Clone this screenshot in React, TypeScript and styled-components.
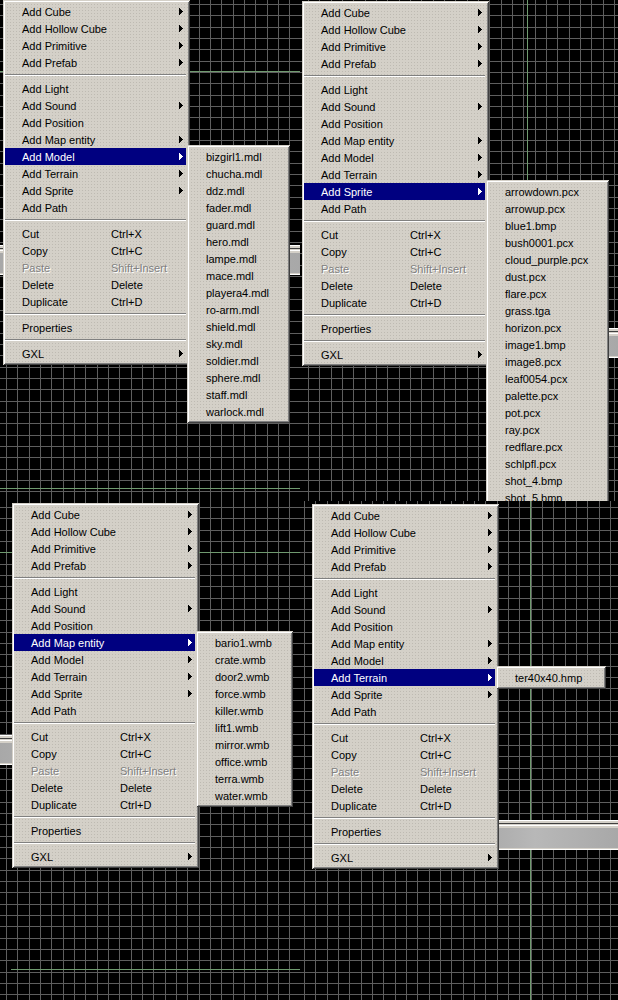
import styled, { createGlobalStyle } from 'styled-components';

const GlobalStyle = createGlobalStyle`
  html, body {
    margin: 0;
    padding: 0;
    background: #000;
  }
  body {
    width: 618px;
    height: 1000px;
    overflow: hidden;
    font-family: "Liberation Sans", Arial, sans-serif;
    font-size: 11px;
  }
`;

type Entry =
  | { kind: 'sep' }
  | { kind: 'item'; label: string; shortcut?: string; sub?: boolean; disabled?: boolean };

const sep: Entry = { kind: 'sep' };
const item = (label: string, opts: Partial<{ shortcut: string; sub: boolean; disabled: boolean }> = {}): Entry => ({
  kind: 'item',
  label,
  ...opts
});

const mainEntries: Entry[] = [
  item('Add Cube', { sub: true }),
  item('Add Hollow Cube', { sub: true }),
  item('Add Primitive', { sub: true }),
  item('Add Prefab', { sub: true }),
  sep,
  item('Add Light'),
  item('Add Sound', { sub: true }),
  item('Add Position'),
  item('Add Map entity', { sub: true }),
  item('Add Model', { sub: true }),
  item('Add Terrain', { sub: true }),
  item('Add Sprite', { sub: true }),
  item('Add Path'),
  sep,
  item('Cut', { shortcut: 'Ctrl+X' }),
  item('Copy', { shortcut: 'Ctrl+C' }),
  item('Paste', { shortcut: 'Shift+Insert', disabled: true }),
  item('Delete', { shortcut: 'Delete' }),
  item('Duplicate', { shortcut: 'Ctrl+D' }),
  sep,
  item('Properties'),
  sep,
  item('GXL', { sub: true })
];

const models = [
  'bizgirl1.mdl', 'chucha.mdl', 'ddz.mdl', 'fader.mdl', 'guard.mdl', 'hero.mdl',
  'lampe.mdl', 'mace.mdl', 'playera4.mdl', 'ro-arm.mdl', 'shield.mdl', 'sky.mdl',
  'soldier.mdl', 'sphere.mdl', 'staff.mdl', 'warlock.mdl'
];

const sprites = [
  'arrowdown.pcx', 'arrowup.pcx', 'blue1.bmp', 'bush0001.pcx', 'cloud_purple.pcx',
  'dust.pcx', 'flare.pcx', 'grass.tga', 'horizon.pcx', 'image1.bmp', 'image8.pcx',
  'leaf0054.pcx', 'palette.pcx', 'pot.pcx', 'ray.pcx', 'redflare.pcx', 'schlpfl.pcx',
  'shot_4.bmp', 'shot_5.bmp'
];

const entities = [
  'bario1.wmb', 'crate.wmb', 'door2.wmb', 'force.wmb', 'killer.wmb',
  'lift1.wmb', 'mirror.wmb', 'office.wmb', 'terra.wmb', 'water.wmb'
];

const terrains = ['ter40x40.hmp'];

type Axis = { dir: 'h' | 'v'; at: number; from?: number };

const GRID = '#5e5e5e';
const AXIS = '#6f9a6f';

// three lines per 34px tile -> the 11/12px spacing of the editor grid
const gridLines = (deg: number) =>
  `linear-gradient(${deg}deg, ${GRID} 0 1px, transparent 1px 11px, ${GRID} 11px 12px, transparent 12px 23px, ${GRID} 23px 24px, transparent 24px)`;

const axisLayer = (a: Axis) =>
  a.dir === 'h'
    ? `linear-gradient(${AXIS}, ${AXIS}) ${a.from ?? 0}px ${a.at}px / 100% 1px no-repeat`
    : `linear-gradient(${AXIS}, ${AXIS}) ${a.at}px ${a.from ?? 0}px / 1px 100% no-repeat`;

const Screen = styled.div`
  display: grid;
  grid-template-columns: 300px 318px;
  grid-template-rows: 501px 499px;
  width: 618px;
  height: 1000px;
  background: #000;
`;

const Viewport = styled.div<{ $gx: number; $gy: number; $axes: Axis[] }>`
  position: relative;
  overflow: hidden;
  background: ${({ $axes }) => $axes.map(axisLayer).join(', ')}${({ $axes }) => ($axes.length ? ',' : '')}
    ${gridLines(90)} ${({ $gx }) => $gx}px 0 / 34px 34px,
    ${gridLines(180)} 0 ${({ $gy }) => $gy}px / 34px 34px,
    #000;
`;

// inactive child window caption, mostly hidden behind the menus
const Caption = styled.div<{ $top: number; $left: number; $width: number }>`
  position: absolute;
  top: ${({ $top }) => $top}px;
  left: ${({ $left }) => $left}px;
  width: ${({ $width }) => $width}px;
  height: 30px;
  box-sizing: border-box;
  border-top: 1px solid #fff;
  border-bottom: 1px solid #fff;
  background:
    linear-gradient(#fff, #fff) 0 4px / 100% 1px no-repeat,
    linear-gradient(#404040, #404040) 0 2px / 100% 1px no-repeat,
    linear-gradient(90deg, #a8a8a8, #b8b8b8 40%, #a8a8a8) 0 7px / 100% 20px no-repeat,
    #d4d0c8;
`;

const MenuBox = styled.div<{ $width: number }>`
  box-sizing: border-box;
  width: ${({ $width }) => $width}px;
  padding: 3px 4px 3px 2px;
  background-color: #d4d0c8;
  background-image: radial-gradient(circle, rgba(150, 146, 138, 0.35) 0.6px, transparent 0.9px);
  background-size: 3px 3px;
  box-shadow:
    inset 1px 1px #d4d0c8,
    inset -1px -1px #404040,
    inset 2px 2px #fff,
    inset -2px -2px #808080;
  color: #000;
  font-family: "Liberation Sans", Arial, sans-serif;
  font-size: 11px;
  user-select: none;
`;

const FloatingMenu = styled(MenuBox)<{ $x: number; $y: number }>`
  position: absolute;
  left: ${({ $x }) => $x}px;
  top: ${({ $y }) => $y}px;
  z-index: 2;
`;

const SubMenu = styled(MenuBox)`
  position: absolute;
  top: -3px;
  left: calc(100% + 1px);
  z-index: 3;
`;

const Row = styled.div<{ $active?: boolean; $disabled?: boolean }>`
  position: relative;
  display: flex;
  align-items: center;
  height: 17px;
  padding-left: 17px;
  padding-right: 3px;
  white-space: nowrap;
  background: ${({ $active }) => ($active ? '#000080' : 'transparent')};
  color: ${({ $active, $disabled }) => ($active ? '#fff' : $disabled ? '#808080' : '#000')};
  text-shadow: ${({ $disabled }) => ($disabled ? '1px 1px 0 #fff' : 'none')};
`;

const Label = styled.span`
  width: 89px;
  flex: none;
`;

const Shortcut = styled.span`
  flex: none;
`;

const Arrow = styled.svg`
  margin-left: auto;
  width: 4px;
  height: 7px;
  flex: none;
  shape-rendering: crispEdges;
`;

const Separator = styled.div`
  height: 9px;
  background:
    linear-gradient(#808080, #808080) 0 3px / 100% 1px no-repeat,
    linear-gradient(#fff, #fff) 0 4px / 100% 1px no-repeat;
`;

const SubArrow = ({ color }: { color: string }) => (
  <Arrow viewBox="0 0 4 7">
    <path d="M0 0h1v1h1v1h1v1h1v1h-1v1h-1v1h-1v1h-1z" fill={color} />
  </Arrow>
);

interface ContextMenuProps {
  x: number;
  y: number;
  active: string;
  files: string[];
  subWidth: number;
}

const ContextMenu = ({ x, y, active, files, subWidth }: ContextMenuProps) => (
  <FloatingMenu $x={x} $y={y} $width={187}>
    {mainEntries.map((e, i) => {
      if (e.kind === 'sep') return <Separator key={i} />;
      const isActive = e.label === active;
      return (
        <Row key={i} $active={isActive} $disabled={e.disabled}>
          <Label>{e.label}</Label>
          {e.shortcut && <Shortcut>{e.shortcut}</Shortcut>}
          {e.sub && <SubArrow color={isActive ? '#fff' : '#000'} />}
          {isActive && (
            <SubMenu $width={subWidth}>
              {files.map(f => (
                <Row key={f}>{f}</Row>
              ))}
            </SubMenu>
          )}
        </Row>
      );
    })}
  </FloatingMenu>
);

export default function App() {
  return (
    <>
      <GlobalStyle />
      <Screen>
        <Viewport $gx={6} $gy={4} $axes={[{ dir: 'h', at: 71 }, { dir: 'h', at: 488 }]}>
          <Caption $top={245} $left={0} $width={300} />
          <ContextMenu x={3} y={0} active="Add Model" files={models} subWidth={103} />
        </Viewport>
        <Viewport $gx={8} $gy={4} $axes={[{ dir: 'v', at: 227 }]}>
          <Caption $top={328} $left={200} $width={118} />
          <ContextMenu x={2} y={1} active="Add Sprite" files={sprites} subWidth={123} />
        </Viewport>
        <Viewport $gx={6} $gy={6} $axes={[{ dir: 'h', at: 51 }, { dir: 'h', at: 468, from: 11 }]}>
          <Caption $top={234} $left={0} $width={200} />
          <ContextMenu x={12} y={2} active="Add Map entity" files={entities} subWidth={97} />
        </Viewport>
        <Viewport $gx={4} $gy={6} $axes={[{ dir: 'v', at: 230 }]}>
          <Caption $top={319} $left={180} $width={138} />
          <ContextMenu x={12} y={3} active="Add Terrain" files={terrains} subWidth={110} />
        </Viewport>
      </Screen>
    </>
  );
}
